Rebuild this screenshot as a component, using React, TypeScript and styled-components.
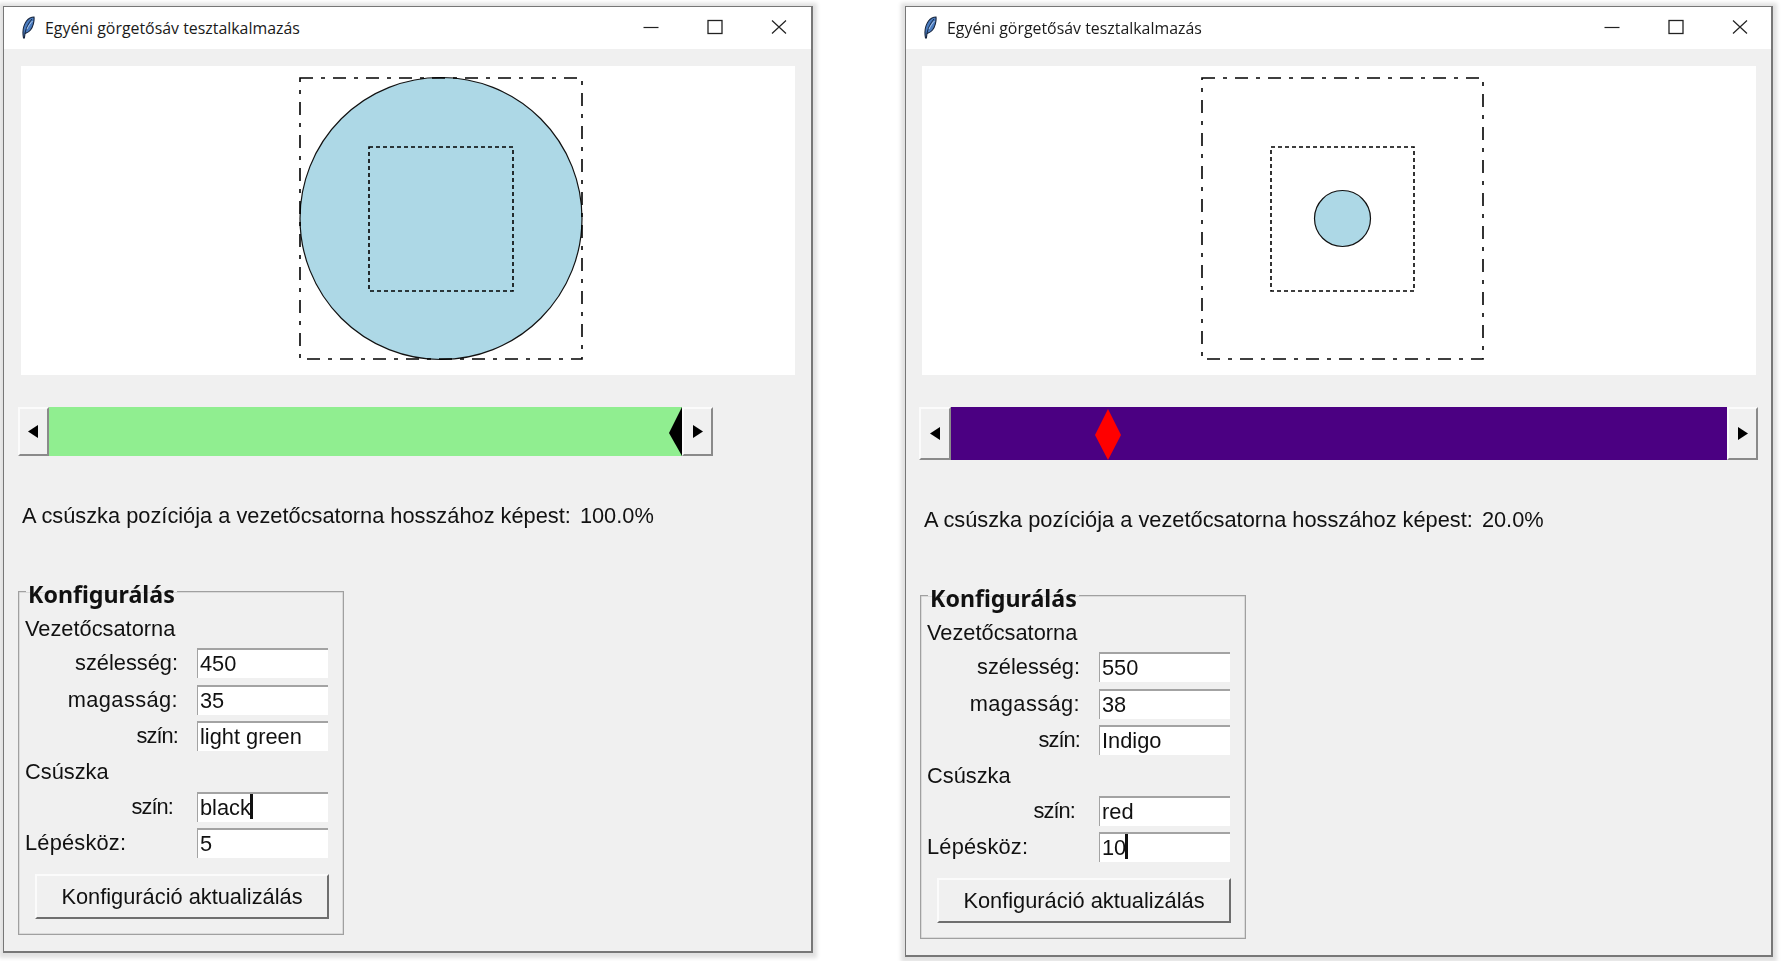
import React from "react";
import styled, { createGlobalStyle } from "styled-components";

const Global = createGlobalStyle`
  html, body { margin: 0; padding: 0; background: #fff; }
  #root { width: 1781px; height: 961px; overflow: hidden; }
`;

const Desktop = styled.div`
  display: flex;
  align-items: flex-start;
  gap: 92px;
  padding: 6px 0 0 3px;
  font-family: "Liberation Sans", Arial, sans-serif;
  color: #111;
  filter: blur(0.35px);
`;

const Win = styled.div<{ $w: number; $h: number }>`
  box-sizing: border-box;
  width: ${(p) => p.$w}px;
  height: ${(p) => p.$h}px;
  background: #f0f0f0;
  border: 1px solid #777;
  border-right-width: 2px;
  border-bottom-width: 2px;
  box-shadow: 0 1px 4px 4px rgba(0, 0, 0, 0.12);
  display: flex;
  flex-direction: column;
`;

const TitleBar = styled.div`
  height: 42px;
  flex: none;
  background: #fff;
  display: flex;
  align-items: center;
`;

const TitleIcon = styled.svg`
  width: 14px;
  height: 24px;
  margin-left: 17px;
  flex: none;
`;

const TitleText = styled.div`
  margin-left: 10px;
  font-family: "Open Sans", "Noto Sans", sans-serif;
  font-size: 15.9px;
  color: #1a1a1a;
  flex: 1;
  white-space: nowrap;
`;

const WinBtn = styled.svg<{ $first?: boolean }>`
  width: 16px;
  height: 16px;
  flex: none;
  margin-left: ${(p) => (p.$first ? 0 : 48)}px;
  margin-top: -3px;
`;

const WinControls = styled.div<{ $pad: number }>`
  display: flex;
  align-items: center;
  padding-right: ${(p) => p.$pad}px;
`;

const Content = styled.div<{ $pad: number }>`
  flex: 1;
  display: flex;
  flex-direction: column;
  padding: 17px 0 0 ${(p) => p.$pad}px;
`;

const Canvas = styled.div<{ $w: number }>`
  width: ${(p) => p.$w}px;
  height: 309px;
  margin-left: 3px;
  background: #fff;
  flex: none;
`;

const CanvasArt = styled.svg`
  display: block;
  width: 100%;
  height: 100%;
`;

const SliderRow = styled.div<{ $h: number }>`
  display: flex;
  width: fit-content;
  height: ${(p) => p.$h}px;
  margin-top: 32px;
`;

const ArrowBtn = styled.div<{ $w: number }>`
  box-sizing: border-box;
  width: ${(p) => p.$w}px;
  flex: none;
  background: #f0f0f0;
  border-top: 2px solid #fbfbfb;
  border-left: 2px solid #fbfbfb;
  border-right: 2px solid #8a8a8a;
  border-bottom: 2px solid #8a8a8a;
  display: flex;
  align-items: center;
  justify-content: center;
`;

const ArrowGlyph = styled.svg`
  width: 11px;
  height: 13px;
`;

const Trough = styled.div<{ $w: number; $color: string }>`
  position: relative;
  width: ${(p) => p.$w}px;
  background: ${(p) => p.$color};
  flex: none;
`;

const Thumb = styled.svg<{ $w: number; $pos: number }>`
  position: absolute;
  top: 0;
  left: ${(p) => p.$pos}px;
  width: ${(p) => p.$w}px;
  height: 100%;
`;

const LowerPart = styled.div<{ $shift: number }>`
  display: flex;
  flex-direction: column;
  padding-left: ${(p) => p.$shift}px;
`;

const ReadoutLine = styled.div`
  display: flex;
  margin: 42px 0 0 4px;
  height: 36px;
  line-height: 36px;
  font-size: 21.8px;
  white-space: nowrap;
`;

const ReadoutValue = styled.span`
  margin-left: 9px;
`;

const Frame = styled.fieldset`
  box-sizing: border-box;
  width: 326px;
  height: 361px;
  margin: 40px 0 0 0;
  padding: 0 15px 0 7px;
  border: 1px solid #a0a0a0;
  box-shadow: inset 0 0 0 0.5px #c4c4c4;
  min-width: 0;
  display: flex;
  flex-direction: column;
`;

const Legend = styled.legend`
  font-family: "Noto Sans", "Open Sans", sans-serif;
  font-weight: 700;
  font-size: 23.2px;
  line-height: 30px;
  padding: 5px 2px 0;
  margin-left: 0;
  color: #111;
`;

const SectionLabel = styled.div<{ $h: number }>`
  height: ${(p) => p.$h}px;
  line-height: ${(p) => p.$h}px;
  margin-left: -1px;
  font-size: 21.8px;
`;

const Row = styled.div<{ $gap: number }>`
  display: flex;
  height: 30px;
  margin-bottom: ${(p) => p.$gap}px;
`;

const FieldLabel = styled.div<{ $right: number; $left?: boolean; $track?: number }>`
  width: 171px;
  box-sizing: border-box;
  padding-right: ${(p) => p.$right}px;
  text-align: ${(p) => (p.$left ? "left" : "right")};
  margin-left: ${(p) => (p.$left ? -1 : 0)}px;
  margin-right: ${(p) => (p.$left ? 1 : 0)}px;
  letter-spacing: ${(p) => p.$track ?? 0}px;
  line-height: 29px;
  font-size: 21.8px;
  flex: none;
`;

const Entry = styled.div`
  box-sizing: border-box;
  width: 131px;
  height: 30px;
  background: #fff;
  border-top: 2px solid #a3a3a3;
  border-left: 1px solid #a3a3a3;
  padding-left: 2px;
  font-size: 21.8px;
  line-height: 27px;
  display: flex;
  flex: none;
`;

const Caret = styled.span`
  width: 3px;
  height: 25px;
  margin-left: -1px;
  background: #111;
  flex: none;
`;

const UpdateButton = styled.div`
  box-sizing: border-box;
  width: 294px;
  height: 45px;
  margin: 16px 0 0 9px;
  background: #f0f0f0;
  border-top: 2px solid #fbfbfb;
  border-left: 2px solid #fbfbfb;
  border-right: 2px solid #6e6e6e;
  border-bottom: 2px solid #6e6e6e;
  font-size: 21.8px;
  line-height: 42px;
  text-align: center;
  white-space: nowrap;
`;

const Feather = () => (
  <TitleIcon viewBox="0 0 14 24">
    <path d="M2.5 22 C1.5 17 2 10 5.5 5 C7.5 2.5 10.5 1 13 1 C13.5 5 12 11 9.5 14 C7.5 16.5 5.5 17 4 17.5 L3.4 22 Z" fill="#4a7cc0" stroke="#16243c" strokeWidth="1.1" />
    <path d="M4 17 C5 12 7.5 7 11 3" fill="none" stroke="#10203a" strokeWidth="0.9" />
    <path d="M6 13 C7.5 10 9 7.5 11.5 5" fill="none" stroke="#cfe0f6" strokeWidth="0.8" />
  </TitleIcon>
);

const Controls = ({ pad }: { pad: number }) => (
  <WinControls $pad={pad}>
    <WinBtn $first viewBox="0 0 16 16">
      <line x1="0.5" y1="8.5" x2="15.5" y2="8.5" stroke="#222" strokeWidth="1.2" />
    </WinBtn>
    <WinBtn viewBox="0 0 16 16">
      <rect x="1" y="1.5" width="14" height="13" fill="none" stroke="#222" strokeWidth="1.3" />
    </WinBtn>
    <WinBtn viewBox="0 0 16 16">
      <path d="M1 1.5 L15 14.5 M15 1.5 L1 14.5" fill="none" stroke="#222" strokeWidth="1.2" />
    </WinBtn>
  </WinControls>
);

type Conf = {
  w: number; h: number; pad: number; ctrlPad: number; canvasW: number; artX: number; rectW: number; r: number;
  sliderH: number; leftBtn: number; troughW: number; troughColor: string; thumbColor: string;
  thumbW: number; thumbPos: number; thumbPts: string; pct: string; shift: number;
  width: string; height: string; color: string; thumb: string; step: string;
  caret: "thumb" | "step";
};

const first: Conf = {
  w: 810, h: 947, pad: 14, ctrlPad: 24, canvasW: 774, artX: 279, rectW: 282, r: 141,
  sliderH: 49, leftBtn: 31, troughW: 633, troughColor: "#90ee90", thumbColor: "#000",
  thumbW: 13, thumbPos: 620, thumbPts: "13,0 13,49 0,26", pct: "100.0%", shift: 0,
  width: "450", height: "35", color: "light green", thumb: "black", step: "5",
  caret: "thumb",
};

const second: Conf = {
  w: 868, h: 951, pad: 13, ctrlPad: 23, canvasW: 834, artX: 280, rectW: 281, r: 28,
  sliderH: 53, leftBtn: 32, troughW: 776, troughColor: "#4b0082", thumbColor: "#f00",
  thumbW: 26, thumbPos: 144, thumbPts: "13,2 26,28 13,53 0,28", pct: "20.0%", shift: 1,
  width: "550", height: "38", color: "Indigo", thumb: "red", step: "10",
  caret: "step",
};

const TkWindow = ({ c }: { c: Conf }) => (
  <Win $w={c.w} $h={c.h}>
    <TitleBar>
      <Feather />
      <TitleText>Egyéni görgetősáv tesztalkalmazás</TitleText>
      <Controls pad={c.ctrlPad} />
    </TitleBar>
    <Content $pad={c.pad}>
      <Canvas $w={c.canvasW}>
        <CanvasArt viewBox={`0 0 ${c.canvasW} 309`}>
          <g transform={`translate(${c.artX} 12)`}>
            <circle cx={c.rectW / 2} cy="140.5" r={c.r} fill="#add8e6" stroke="#111" strokeWidth="1.2" />
            <rect x="0" y="0" width={c.rectW} height="281" fill="none" stroke="#000" strokeWidth="1.6" strokeDasharray="13 8 4 8" />
            <rect x="69" y="69" width={c.rectW - 138} height="144" fill="none" stroke="#000" strokeWidth="1.6" strokeDasharray="4 3" />
          </g>
        </CanvasArt>
      </Canvas>
      <SliderRow $h={c.sliderH}>
        <ArrowBtn $w={c.leftBtn}>
          <ArrowGlyph viewBox="0 0 11 13"><polygon points="0,6.5 10,0 10,13" fill="#000" /></ArrowGlyph>
        </ArrowBtn>
        <Trough $w={c.troughW} $color={c.troughColor}>
          <Thumb $w={c.thumbW} $pos={c.thumbPos} viewBox={`0 0 ${c.thumbW} ${c.sliderH}`} preserveAspectRatio="none">
            <polygon points={c.thumbPts} fill={c.thumbColor} />
          </Thumb>
        </Trough>
        <ArrowBtn $w={31}>
          <ArrowGlyph viewBox="0 0 11 13"><polygon points="11,6.5 1,0 1,13" fill="#000" /></ArrowGlyph>
        </ArrowBtn>
      </SliderRow>
      <LowerPart $shift={c.shift}>
        <ReadoutLine>
          A csúszka pozíciója a vezetőcsatorna hosszához képest:
          <ReadoutValue>{c.pct}</ReadoutValue>
        </ReadoutLine>
        <Frame>
          <Legend>Konfigurálás</Legend>
          <SectionLabel $h={39}>Vezetőcsatorna</SectionLabel>
          <Row $gap={7}><FieldLabel $right={19}>szélesség:</FieldLabel><Entry>{c.width}</Entry></Row>
          <Row $gap={6}><FieldLabel $right={19} $track={0.4}>magasság:</FieldLabel><Entry>{c.height}</Entry></Row>
          <Row $gap={0}><FieldLabel $right={19} $track={-0.9}>szín:</FieldLabel><Entry>{c.color}</Entry></Row>
          <SectionLabel $h={41}>Csúszka</SectionLabel>
          <Row $gap={6}>
            <FieldLabel $right={24} $track={-0.9}>szín:</FieldLabel>
            <Entry>{c.thumb}{c.caret === "thumb" && <Caret />}</Entry>
          </Row>
          <Row $gap={0}>
            <FieldLabel $right={0} $left $track={0.2}>Lépésköz:</FieldLabel>
            <Entry>{c.step}{c.caret === "step" && <Caret />}</Entry>
          </Row>
          <UpdateButton>Konfiguráció aktualizálás</UpdateButton>
        </Frame>
      </LowerPart>
    </Content>
  </Win>
);

export default function App() {
  return (
    <Desktop>
      <Global />
      <TkWindow c={first} />
      <TkWindow c={second} />
    </Desktop>
  );
}
